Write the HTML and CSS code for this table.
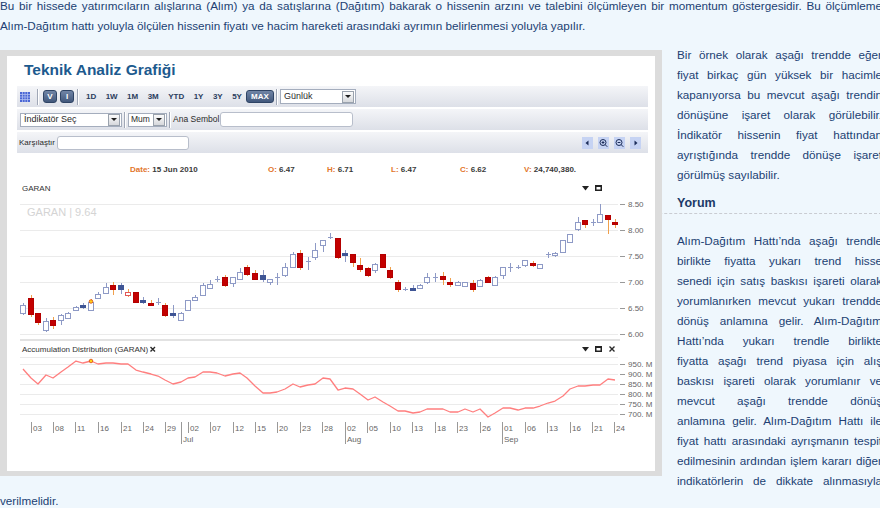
FILE: index.html
```html
<!DOCTYPE html>
<html lang="tr">
<head>
<meta charset="utf-8">
<title>Alım-Dağıtım Hattı</title>
<link rel="stylesheet" href="styles.css">
</head>
<body>
<div class="page">
  <p class="intro"><span class="ln">Bu bir hissede yatırımcıların alışlarına (Alım) ya da satışlarına (Dağıtım) bakarak o hissenin arzını ve talebini ölçümleyen bir momentum göstergesidir. Bu ölçümleme</span>Alım-Dağıtım hattı yoluyla ölçülen hissenin fiyatı ve hacim hareketi arasındaki ayrımın belirlenmesi yoluyla yapılır.</p>

  <div class="figure">
    <div class="panel">
      <h2 class="title">Teknik Analiz Grafiği</h2>

      <div class="bar">
        <svg class="grid-ico" width="10" height="10" viewBox="0 0 10 10"><rect width="10" height="10" fill="#4a66d4"/><path d="M0 2.5H10M0 5H10M0 7.5H10M2.5 0V10M5 0V10M7.5 0V10" stroke="#aebdf0" stroke-width="0.8"/></svg>
        <span class="sep sep-a"></span>
        <span class="btn btn-v">V</span>
        <span class="btn btn-i">I</span>
        <span class="sep sep-b"></span>
        <span class="periods"><span>1D</span><span>1W</span><span>1M</span><span>3M</span><span>YTD</span><span>1Y</span><span>3Y</span><span>5Y</span></span>
        <span class="btn btn-max">MAX</span>
        <span class="sep sep-c"></span>
        <span class="dd dd-period"><span class="dd-text">Günlük</span><span class="dd-arrow"></span></span>
      </div>

      <div class="bar">
        <span class="dd dd-ind"><span class="dd-text">İndikatör Seç</span><span class="dd-arrow"></span></span>
        <span class="sep sep-d"></span>
        <span class="dd dd-mum"><span class="dd-text">Mum</span><span class="dd-arrow"></span></span>
        <span class="sep sep-d"></span>
        <span class="bar-label lbl-ana">Ana Sembol</span>
        <span class="inp inp-ana"></span>
      </div>

      <div class="bar">
        <span class="bar-label lbl-kars">Karşılaştır</span>
        <span class="inp inp-kars"></span>
        <span class="navs">
          <span class="nav"><svg width="11" height="12" viewBox="0 0 11 12"><path d="M3.5 6L6.5 3.5V8.5Z" fill="#1c2d5a"/></svg></span>
          <span class="nav"><svg width="11" height="12" viewBox="0 0 11 12"><circle cx="5" cy="5.5" r="3" fill="none" stroke="#1c2d5a" stroke-width="1"/><path d="M7.2 7.7L9.3 9.8M3.6 5.5H6.4M5 4.1V6.9" stroke="#1c2d5a" stroke-width="1"/></svg></span>
          <span class="nav"><svg width="11" height="12" viewBox="0 0 11 12"><circle cx="5" cy="5.5" r="3" fill="none" stroke="#1c2d5a" stroke-width="1"/><path d="M7.2 7.7L9.3 9.8M3.6 5.5H6.4" stroke="#1c2d5a" stroke-width="1"/></svg></span>
          <span class="nav"><svg width="11" height="12" viewBox="0 0 11 12"><path d="M7.5 6L4.5 3.5V8.5Z" fill="#1c2d5a"/></svg></span>
        </span>
      </div>

      <svg class="chart" width="648" height="318" viewBox="7 153 648 318">
        <!-- info row -->
        <text class="info" x="130" y="172"><tspan class="k">Date:</tspan> 15 Jun 2010</text>
        <text class="info" x="268" y="172"><tspan class="k">O:</tspan> 6.47</text>
        <text class="info" x="327" y="172"><tspan class="k">H:</tspan> 6.71</text>
        <text class="info" x="391" y="172"><tspan class="k">L:</tspan> 6.47</text>
        <text class="info" x="460" y="172"><tspan class="k">C:</tspan> 6.62</text>
        <text class="info" x="524" y="172"><tspan class="k">V:</tspan> 24,740,380.</text>

        <!-- main panel header -->
        <text class="lbl" x="22" y="191">GARAN</text>
        <path class="ico" d="M582 186H589L585.5 190.5Z"/>
        <rect class="ico" x="595" y="185" width="7" height="6"/>
        <rect x="596.5" y="187" width="4" height="2.5" fill="#fff"/>

        <!-- grid -->
        <path class="grid" d="M20 204.5H618M20 230.5H618M20 256.5H618M20 282.5H618M20 308.5H618M20 334.5H618"/>
        <path class="tick" d="M620 204.5H625M620 230.5H625M620 256.5H625M620 282.5H625M620 308.5H625M620 334.5H625"/>
        <text class="ax" x="628" y="207">8.50</text>
        <text class="ax" x="628" y="233">8.00</text>
        <text class="ax" x="628" y="259">7.50</text>
        <text class="ax" x="628" y="285">7.00</text>
        <text class="ax" x="628" y="311">6.50</text>
        <text class="ax" x="628" y="337">6.00</text>
        <text class="wm" x="27" y="216">GARAN | 9.64</text>

        <!-- candles -->
        <g class="candles">
          <path class="wh" d="M23 303V315"/><rect class="bh" x="20.5" y="305" width="5" height="8"/>
          <path class="wr" d="M31 295V317"/><rect class="br" x="28.5" y="298" width="5" height="16"/>
          <path class="wr" d="M38 313V325"/><rect class="br" x="35.5" y="313" width="5" height="9"/>
          <path class="wh" d="M46 318V332"/><rect class="bh" x="43.5" y="321" width="5" height="9"/>
          <path class="wr" d="M53 317V329"/><rect class="br" x="50.5" y="320" width="5" height="5"/>
          <path class="wh" d="M61 314V325"/><rect class="bh" x="58.5" y="315" width="5" height="5"/>
          <path class="wh" d="M68 312V319"/><rect class="bh" x="65.5" y="313" width="5" height="5"/>
          <path class="wh" d="M76 306V311"/><rect class="bh" x="73.5" y="307" width="5" height="3"/>
          <path class="wh" d="M83 303V309"/><rect class="bb" x="80.5" y="305" width="5" height="2"/>
          <path class="wr" d="M91 299V310"/><rect class="bh" x="88.5" y="302" width="5" height="8"/>
          <path class="wh" d="M98 292V298"/><rect class="bh" x="95.5" y="294" width="5" height="4"/>
          <path class="wh" d="M106 283V293"/><rect class="bh" x="103.5" y="287" width="5" height="6"/>
          <path class="wr" d="M113 282V295"/><rect class="br" x="110.5" y="285" width="5" height="4"/>
          <path class="wh" d="M121 283V294"/><rect class="bb" x="118.5" y="285" width="5" height="4"/>
          <path class="wr" d="M128 289V297"/><rect class="bro" x="125.5" y="292" width="5" height="3"/>
          <path class="wr" d="M136 292V302"/><rect class="br" x="133.5" y="292" width="5" height="10"/>
          <path class="wh" d="M143 297V304"/><rect class="bb" x="140.5" y="300" width="5" height="2"/>
          <path class="wr" d="M151 300V305"/><rect class="br" x="148.5" y="303" width="5" height="2"/>
          <path class="wh" d="M158 298V305M155.5 302H160.5"/>
          <path class="wr" d="M165 303V317"/><rect class="br" x="162.5" y="305" width="5" height="10"/>
          <path class="wh" d="M173 305V318"/><rect class="bb" x="170.5" y="313" width="5" height="2"/>
          <path class="wh" d="M181 312V320"/><rect class="bh" x="178.5" y="313" width="5" height="7"/>
          <path class="wh" d="M188 300V310"/><rect class="bh" x="185.5" y="300" width="5" height="10"/>
          <path class="wh" d="M195 295V300"/><rect class="bh" x="192.5" y="297" width="5" height="3"/>
          <path class="wh" d="M203 283V295"/><rect class="bh" x="200.5" y="285" width="5" height="10"/>
          <path class="wh" d="M210 280V289"/><rect class="bh" x="207.5" y="284" width="5" height="4"/>
          <path class="wh" d="M217 276V282M214.5 279H219.5"/>
          <path class="wr" d="M225 275V287"/><rect class="br" x="222.5" y="277" width="5" height="8"/>
          <path class="wh" d="M233 277V287"/><rect class="bh" x="230.5" y="277" width="5" height="6"/>
          <path class="wh" d="M240 268V279"/><rect class="bh" x="237.5" y="272" width="5" height="7"/>
          <path class="wr" d="M247 265V276"/><rect class="br" x="244.5" y="267" width="5" height="7"/>
          <path class="wr" d="M255 270V279"/><rect class="br" x="252.5" y="273" width="5" height="6"/>
          <path class="wh" d="M263 270V282"/><rect class="bb" x="260.5" y="275" width="5" height="4"/>
          <path class="wh" d="M270 279V285"/><rect class="bh" x="267.5" y="279" width="5" height="3"/>
          <path class="wh" d="M277 273V285M274.5 277H279.5"/>
          <path class="wh" d="M285 263V277"/><rect class="bh" x="282.5" y="267" width="5" height="8"/>
          <path class="wh" d="M293 252V267"/><rect class="bh" x="290.5" y="254" width="5" height="13"/>
          <path class="wr" d="M300 250V270"/><rect class="br" x="297.5" y="253" width="5" height="14"/>
          <path class="wh" d="M308 257V270M305.5 261H310.5"/>
          <path class="wh" d="M315 243V260"/><rect class="bh" x="312.5" y="250" width="5" height="7"/>
          <path class="wh" d="M323 240V252"/><rect class="bh" x="320.5" y="240" width="5" height="5"/>
          <path class="wh" d="M330 233V239M327.5 237H332.5"/>
          <path class="wr" d="M338 238V259"/><rect class="br" x="335.5" y="238" width="5" height="19"/>
          <path class="wh" d="M345 250V262"/><rect class="bb" x="342.5" y="253" width="5" height="2"/>
          <path class="wr" d="M353 254V267"/><rect class="br" x="350.5" y="254" width="5" height="8"/>
          <path class="wr" d="M360 258V272"/><rect class="br" x="357.5" y="265" width="5" height="4"/>
          <path class="wr" d="M368 267V277"/><rect class="br" x="365.5" y="268" width="5" height="7"/>
          <path class="wh" d="M375 263V273"/><rect class="bh" x="372.5" y="264" width="5" height="6"/>
          <path class="wr" d="M383 254V267"/><rect class="br" x="380.5" y="254" width="5" height="13"/>
          <path class="wr" d="M390 267V279"/><rect class="br" x="387.5" y="270" width="5" height="7"/>
          <path class="wr" d="M398 280V292"/><rect class="br" x="395.5" y="282" width="5" height="7"/>
          <path class="wh" d="M405 287V291M402.5 289H407.5"/>
          <path class="wh" d="M413 285V291"/><rect class="bb" x="410.5" y="288" width="5" height="2"/>
          <path class="wh" d="M420 284V289"/><rect class="bh" x="417.5" y="285" width="5" height="3"/>
          <path class="wh" d="M427 273V284"/><rect class="bh" x="424.5" y="277" width="5" height="5"/>
          <path class="wh" d="M435 273V282M432.5 277H437.5"/>
          <path class="wr" d="M443 272V285"/><rect class="br" x="440.5" y="276" width="5" height="3"/>
          <path class="wr" d="M450 278V287"/><rect class="br" x="447.5" y="282" width="5" height="2"/>
          <path class="wh" d="M458 281V286"/><rect class="bh" x="455.5" y="282" width="5" height="3"/>
          <path class="wh" d="M465 282V287"/><rect class="bh" x="462.5" y="282" width="5" height="4"/>
          <path class="wr" d="M473 280V292"/><rect class="br" x="470.5" y="283" width="5" height="6"/>
          <path class="wh" d="M480 279V287"/><rect class="bh" x="477.5" y="280" width="5" height="6"/>
          <path class="wr" d="M488 276V283"/><rect class="br" x="485.5" y="277" width="5" height="5"/>
          <path class="wh" d="M495 276V285"/><rect class="bh" x="492.5" y="277" width="5" height="8"/>
          <path class="wh" d="M503 267V279"/><rect class="bh" x="500.5" y="267" width="5" height="8"/>
          <path class="wh" d="M510 263V272M507.5 267H512.5"/>
          <path class="wh" d="M518 265V269M515.5 267H520.5"/>
          <path class="wh" d="M525 260V267"/><rect class="bh" x="522.5" y="260" width="5" height="5"/>
          <path class="wr" d="M533 261V267"/><rect class="br" x="530.5" y="263" width="5" height="2"/>
          <path class="wh" d="M540 264V269"/><rect class="bh" x="537.5" y="264" width="5" height="4"/>
          <path class="wh" d="M548 252V258M545.5 254H550.5"/>
          <path class="wh" d="M555 252V257"/><rect class="bh" x="552.5" y="253" width="5" height="2"/>
          <path class="wh" d="M563 240V252"/><rect class="bh" x="560.5" y="240" width="5" height="12"/>
          <path class="wh" d="M570 234V243"/><rect class="bh" x="567.5" y="234" width="5" height="8"/>
          <path class="wh" d="M578 217V231"/><rect class="bh" x="575.5" y="222" width="5" height="7"/>
          <path class="wr" d="M585 220V228"/><rect class="br" x="582.5" y="220" width="5" height="4"/>
          <path class="wh" d="M593 219V226M590.5 222H595.5"/>
          <path class="wh" d="M600 204V223"/><rect class="bh" x="597.5" y="214" width="5" height="8"/>
          <path class="wr" d="M608 215V234"/><rect class="br" x="605.5" y="215" width="5" height="4"/>
          <path class="wr" d="M615 219V228"/><rect class="br" x="612.5" y="222" width="5" height="2"/>
        </g>
        <circle class="mark" cx="91" cy="301.5" r="1.8"/>

        <!-- indicator panel -->
        <path class="divider" d="M20 340H620"/>
        <text class="lbl" x="22" y="352">Accumulation Distribution (GARAN)</text>
        <path class="x-ico" d="M150.5 347L155 351.5M155 347L150.5 351.5"/>
        <path class="ico" d="M582 347H589L585.5 351.5Z"/>
        <rect class="ico" x="595" y="346" width="7" height="6"/>
        <rect x="596.5" y="348" width="4" height="2.5" fill="#fff"/>
        <path class="x-ico" d="M609.5 346.5L614.5 351.5M614.5 346.5L609.5 351.5"/>

        <path class="grid" d="M20 357.5H618M20 364.5H618M20 374.5H618M20 384.5H618M20 394.5H618M20 404.5H618M20 414.5H618"/>
        <path class="tick" d="M620 364.5H625M620 374.5H625M620 384.5H625M620 394.5H625M620 404.5H625M620 414.5H625"/>
        <text class="ax" x="628" y="367">950. M</text>
        <text class="ax" x="628" y="377">900. M</text>
        <text class="ax" x="628" y="387">850. M</text>
        <text class="ax" x="628" y="397">800. M</text>
        <text class="ax" x="628" y="407">750. M</text>
        <text class="ax" x="628" y="417">700. M</text>

        <polyline class="adl" points="23,369 31,378 38,384 46,375 53,378 61,372 68,367 76,361 83,363 91,361 98,364 106,363 113,363 121,364 128,364 136,370 143,372 151,374 158,376 165,380 173,384 181,382 188,378 195,377 203,372 210,372 217,373 225,376 233,374 240,373 247,378 255,386 263,393 270,393 277,392 285,389 293,384 300,387 308,385 315,384 323,378 330,379 338,390 345,388 353,389 360,394 368,400 375,397 383,402 390,406 398,411 405,411 413,413 420,412 427,409 435,409 443,409 450,412 458,412 465,409 473,412 480,409 488,417 495,413 503,408 510,408 518,410 525,408 533,408 540,406 548,403 555,401 563,396 570,389 578,386 585,386 593,385 600,385 608,379 615,380"/>
        <circle class="mark" cx="91" cy="361" r="1.8"/>

        <!-- x axis -->
        <path class="tick" d="M31.5 422V433M53.5 422V433M75.5 422V433M98.5 422V433M121.5 422V433M143.5 422V433M165.5 422V433M181.5 422V444M188.5 422V433M210.5 422V433M233.5 422V433M255.5 422V433M277.5 422V433M300.5 422V433M322.5 422V433M345.5 422V444M367.5 422V433M390.5 422V433M412.5 422V433M435.5 422V433M457.5 422V433M480.5 422V433M502.5 422V444M525.5 422V433M547.5 422V433M570.5 422V433M592.5 422V433M614.5 422V433"/>
        <text class="ax" x="33" y="431">03</text>
        <text class="ax" x="55" y="431">08</text>
        <text class="ax" x="77" y="431">11</text>
        <text class="ax" x="100" y="431">16</text>
        <text class="ax" x="123" y="431">21</text>
        <text class="ax" x="145" y="431">24</text>
        <text class="ax" x="167" y="431">29</text>
        <text class="ax" x="190" y="431">02</text>
        <text class="ax" x="183" y="442">Jul</text>
        <text class="ax" x="212" y="431">07</text>
        <text class="ax" x="235" y="431">12</text>
        <text class="ax" x="257" y="431">15</text>
        <text class="ax" x="279" y="431">20</text>
        <text class="ax" x="302" y="431">23</text>
        <text class="ax" x="324" y="431">28</text>
        <text class="ax" x="347" y="431">02</text>
        <text class="ax" x="347" y="442">Aug</text>
        <text class="ax" x="369" y="431">05</text>
        <text class="ax" x="392" y="431">10</text>
        <text class="ax" x="414" y="431">13</text>
        <text class="ax" x="437" y="431">18</text>
        <text class="ax" x="459" y="431">23</text>
        <text class="ax" x="482" y="431">26</text>
        <text class="ax" x="504" y="431">01</text>
        <text class="ax" x="504" y="442">Sep</text>
        <text class="ax" x="527" y="431">06</text>
        <text class="ax" x="549" y="431">13</text>
        <text class="ax" x="572" y="431">16</text>
        <text class="ax" x="594" y="431">21</text>
        <text class="ax" x="616" y="431">24</text>
      </svg>
    </div>
  </div>

  <p class="col"><span class="ln">Bir örnek olarak aşağı trendde eğer</span><span class="ln">fiyat birkaç gün yüksek bir hacimle</span><span class="ln">kapanıyorsa bu mevcut aşağı trendin</span><span class="ln">dönüşüne işaret olarak görülebilir.</span><span class="ln">İndikatör hissenin fiyat hattından</span><span class="ln">ayrıştığında trendde dönüşe işaret</span>görülmüş sayılabilir.</p>

  <h3 class="heading">Yorum</h3>

  <p class="col col-last"><span class="ln">Alım-Dağıtım Hattı’nda aşağı trendle</span><span class="ln">birlikte fiyatta yukarı trend hisse</span><span class="ln">senedi için satış baskısı işareti olarak</span><span class="ln">yorumlanırken mevcut yukarı trendde</span><span class="ln">dönüş anlamına gelir. Alım-Dağıtım</span><span class="ln">Hattı’nda yukarı trendle birlikte</span><span class="ln">fiyatta aşağı trend piyasa için alış</span><span class="ln">baskısı işareti olarak yorumlanır ve</span><span class="ln">mevcut aşağı trendde dönüş</span><span class="ln">anlamına gelir. Alım-Dağıtım Hattı ile</span><span class="ln">fiyat hattı arasındaki ayrışmanın tespit</span><span class="ln">edilmesinin ardından işlem kararı diğer</span><span class="ln">indikatörlerin de dikkate alınmasıyla</span>verilmelidir.</p>
</div>
</body>
</html>
```

FILE: styles.css
```css
html, body {
  margin: 0;
  padding: 0;
  overflow: hidden;
  background: #eff7fd;
}

body {
  font-family: "Liberation Sans", Arial, sans-serif;
  font-size: 11.7px;
  line-height: 20px;
  color: #213f73;
}

.page {
  width: 882px;
}

.intro {
  margin: -4px 0 9px;
  text-align: justify;
}

.ln {
  display: block;
  text-align: justify;
  text-align-last: justify;
}

.col {
  margin: 0 0 8px;
  text-align: justify;
}

.col-last {
  margin: 0;
}

.heading {
  margin: 0 0 17px;
  font-size: 12.5px;
  font-weight: bold;
  line-height: 20px;
  color: #1c3a68;
  border-bottom: 1px dashed #c9ccd2;
}

/* figure */
.figure {
  float: left;
  width: 648px;
  margin: 5px 15px 0 0;
  padding: 6px 7px 5px;
  background: #dcdcdc;
}

.panel {
  height: 415px;
  background: #fff;
  display: flex;
  flex-direction: column;
}

.title {
  margin: 0;
  height: 30px;
  padding-left: 17px;
  box-sizing: border-box;
  font-family: "Liberation Sans", Arial, sans-serif;
  font-size: 15.5px;
  font-weight: bold;
  line-height: 27px;
  color: #1d5a8e;
}

.bar {
  display: flex;
  align-items: center;
  height: 21px;
  margin: 0 7px 0 10px;
  background: linear-gradient(#f4f5f8, #dde0e8);
  font-family: "Liberation Sans", Arial, sans-serif;
  line-height: 1;
}

.bar > * {
  flex-shrink: 0;
}

.bar + .bar {
  margin-top: 2px;
}

.grid-ico {
  display: block;
  margin-left: 3px;
}

.sep {
  width: 1px;
  height: 16px;
  background: #a0a7b6;
  border-right: 1px solid #fff;
}

.sep-a { margin-left: 7px; }
.sep-b { margin-left: 3px; }
.sep-c { margin-left: 2px; }
.sep-d { margin-left: 2px; }

.btn {
  height: 13px;
  box-sizing: border-box;
  border: 1px solid #2f4465;
  border-radius: 3px;
  background: linear-gradient(#7185a6, #42587c);
  color: #fff;
  font-size: 8px;
  font-weight: bold;
  line-height: 11px;
  text-align: center;
}

.btn-v { width: 14px; margin-left: 4px; }
.btn-i { width: 14px; margin-left: 3px; }
.btn-max { width: 28px; margin-left: 4px; }

.periods {
  display: flex;
  justify-content: space-between;
  width: 156px;
  margin-left: 7px;
  font-size: 8px;
  font-weight: bold;
  color: #2b3d5e;
}

.dd {
  display: flex;
  align-items: center;
  height: 14px;
  box-sizing: border-box;
  border: 1px solid #a4adbd;
  background: #fff;
}

.dd-text {
  flex: 1 1 auto;
  min-width: 0;
  padding-left: 3px;
  font-size: 9px;
  color: #2a2a2a;
  white-space: nowrap;
}

.dd-arrow {
  display: flex;
  flex-shrink: 0;
  align-items: center;
  justify-content: center;
  width: 10px;
  height: 10px;
  margin-right: 1px;
  border: 1px solid #9aa2ad;
  background: linear-gradient(#fbfbfb, #d6d8dc);
}

.dd-arrow::after {
  content: "";
  border-left: 3px solid transparent;
  border-right: 3px solid transparent;
  border-top: 3px solid #1e1e1e;
}

.dd-period { width: 76px; margin-left: 2px; height: 15px; }
.dd-ind { width: 102px; margin-left: 3px; }
.dd-mum { width: 39px; margin-left: 2px; }
.dd-mum .dd-text { padding-left: 2px; font-size: 8.5px; }

.bar-label {
  font-size: 8.5px;
  color: #2a2a2a;
  white-space: nowrap;
}

.lbl-ana { margin-left: 2px; }
.lbl-kars { margin-left: 2px; font-size: 8px; }

.inp {
  display: block;
  height: 15px;
  box-sizing: border-box;
  border: 1px solid #b8becb;
  border-radius: 3px;
  background: #fff;
}

.inp-ana { width: 133px; margin-left: 1px; }
.inp-kars { width: 132px; height: 14px; margin-left: 2px; }

.navs {
  display: flex;
  gap: 5px;
  margin-left: auto;
  margin-right: 7px;
}

.nav {
  display: block;
  width: 11px;
  height: 12px;
  background: #c6d3f3;
}

.nav svg {
  display: block;
}

/* chart */
.chart {
  display: block;
  font-family: "Liberation Sans", Arial, sans-serif;
}

.chart text {
  font-size: 8px;
  fill: #555;
}

.chart .info {
  font-weight: bold;
  fill: #3a3a3a;
}

.chart .info .k {
  fill: #e2762b;
}

.chart .lbl {
  fill: #333;
}

.chart .ax {
  fill: #666;
}

.chart .wm {
  font-size: 11px;
  fill: #d4d4d4;
}

.grid {
  stroke: #ebebeb;
  stroke-width: 1;
  fill: none;
}

.tick {
  stroke: #999;
  stroke-width: 1;
  fill: none;
}

.divider {
  stroke: #e2e2e2;
  stroke-width: 2;
}

.ico {
  fill: #222;
}

.x-ico {
  stroke: #2a2a2a;
  stroke-width: 1.4;
  fill: none;
}

.candles {
  shape-rendering: crispEdges;
}

.wh { stroke: #8e9ac6; stroke-width: 1; fill: none; }
.wr { stroke: #f0a04c; stroke-width: 1; fill: none; }
.bh { fill: #fff; stroke: #8e9ac6; stroke-width: 1; }
.br { fill: #c30000; stroke: #b30000; stroke-width: 1; }
.bb { fill: #3f5595; stroke: #3f5595; stroke-width: 1; }
.bro { fill: #fff; stroke: #e25656; stroke-width: 1; }

.adl {
  fill: none;
  stroke: #ff7f7f;
  stroke-width: 1.3;
  stroke-linejoin: round;
}

.mark {
  fill: #ffd21a;
  stroke: #d9480f;
  stroke-width: 0.8;
}
```
